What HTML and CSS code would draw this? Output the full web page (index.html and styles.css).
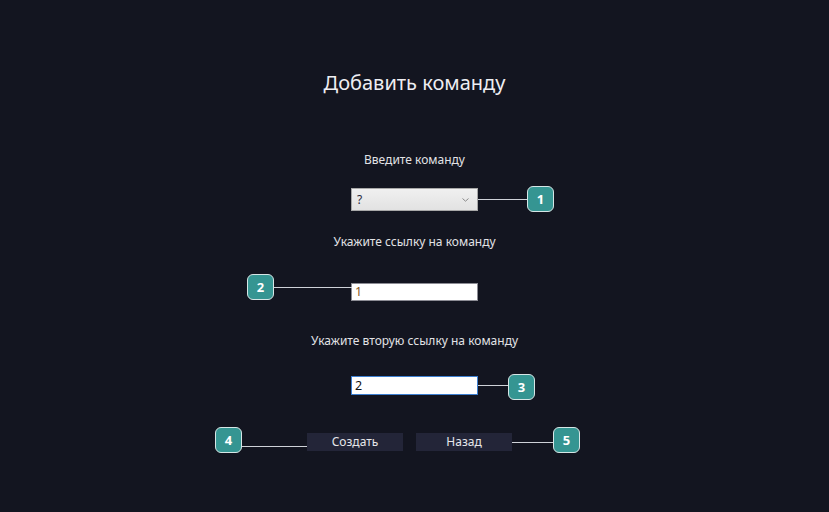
FILE: index.html
```html
<!DOCTYPE html>
<html lang="ru">
<head>
<meta charset="utf-8">
<title>Добавить команду</title>
<link rel="stylesheet" href="styles.css">
</head>
<body>
<div class="page">
  <h1 class="title">Добавить команду</h1>

  <div class="label label-1">Введите команду</div>
  <div class="combo">
    <span class="combo-value">?</span>
    <svg class="chevron" width="7" height="4" viewBox="0 0 7 4"><path d="M0.5 0.5 L3.5 3.2 L6.5 0.5" fill="none" stroke="#8a8a8a" stroke-width="1"/></svg>
    <span class="line line-1"></span>
    <span class="badge badge-1">1</span>
  </div>

  <div class="label label-2">Укажите ссылку на команду</div>
  <div class="field field-1">
    <span class="field-value value-1">1</span>
    <span class="line line-2"></span>
    <span class="badge badge-2">2</span>
  </div>

  <div class="label label-3">Укажите вторую ссылку на команду</div>
  <div class="field field-2">
    <span class="field-value">2</span>
    <span class="line line-3"></span>
    <span class="badge badge-3">3</span>
  </div>

  <div class="buttons">
    <button class="btn">Создать</button>
    <button class="btn">Назад</button>
    <span class="line line-4"></span>
    <span class="badge badge-4">4</span>
    <span class="line line-5"></span>
    <span class="badge badge-5">5</span>
  </div>
</div>
</body>
</html>
```

FILE: styles.css
```css
html, body {
  margin: 0;
  padding: 0;
  background: #131520;
  width: 829px;
  height: 512px;
  overflow: hidden;
}

.page {
  display: flex;
  flex-direction: column;
  align-items: center;
  padding-top: 71px;
  font-family: "Noto Sans", "Open Sans", sans-serif;
  color: #e6e6ea;
}

.title {
  margin: 0;
  font-size: 20px;
  line-height: 24px;
  font-weight: 400;
  color: #eeeef2;
}

.label {
  font-size: 12px;
  line-height: 16px;
  color: #e2e2e6;
}

.label-1 { margin-top: 57px; }
.label-2 { margin-top: 23px; }
.label-3 { margin-top: 32px; }

.combo {
  position: relative;
  margin-top: 20px;
  width: 127px;
  height: 23px;
  box-sizing: border-box;
  border: 1px solid #a8a8a8;
  background: linear-gradient(#f0f0f0, #e2e2e2);
  display: flex;
  align-items: center;
  justify-content: space-between;
  padding: 0 8px 0 5px;
}

.combo-value {
  font-size: 12px;
  color: #2a2a40;
}

.chevron { display: block; }

.field {
  position: relative;
  width: 127px;
  box-sizing: border-box;
  background: #ffffff;
  display: flex;
  align-items: center;
  padding-left: 3px;
}

.field-1 {
  margin-top: 33px;
  height: 18px;
  border: 1px solid #8c8c94;
}

.field-2 {
  margin-top: 27px;
  height: 19px;
  border: 1px solid #3d7fd0;
}

.field-value {
  font-size: 12.5px;
  line-height: 16px;
  color: #111111;
}

.value-1 {
  color: #8a5a22;
}

.buttons {
  position: relative;
  margin-top: 38px;
  margin-right: 10px;
  display: flex;
  gap: 13px;
}

.btn {
  width: 96px;
  height: 18px;
  border: none;
  padding: 0;
  background: #232538;
  color: #e6e6ea;
  font-family: "Noto Sans", "Open Sans", sans-serif;
  font-size: 12px;
  line-height: 16px;
}

.badge {
  position: absolute;
  width: 27px;
  height: 26px;
  box-sizing: border-box;
  border: 1.5px solid #d6e6e6;
  border-radius: 6px;
  background: #359592;
  color: #ffffff;
  font-family: "Noto Sans", "Open Sans", sans-serif;
  font-size: 13px;
  font-weight: 700;
  display: flex;
  align-items: center;
  justify-content: center;
}

.line {
  position: absolute;
  height: 1px;
  background: #cfd2d8;
}

.line-1 { left: 126px; width: 50px; top: 10px; }
.badge-1 { left: 175px; top: -3px; }

.line-2 { left: -79px; width: 79px; top: 3px; }
.badge-2 { left: -105px; top: -10px; }

.line-3 { left: 126px; width: 31px; top: 8px; }
.badge-3 { left: 156px; top: -3px; }

.line-4 { left: -66px; width: 66px; top: 13px; }
.badge-4 { left: -92px; top: -6px; }

.line-5 { left: 205px; width: 41px; top: 9px; }
.badge-5 { left: 246px; top: -6px; }
```
